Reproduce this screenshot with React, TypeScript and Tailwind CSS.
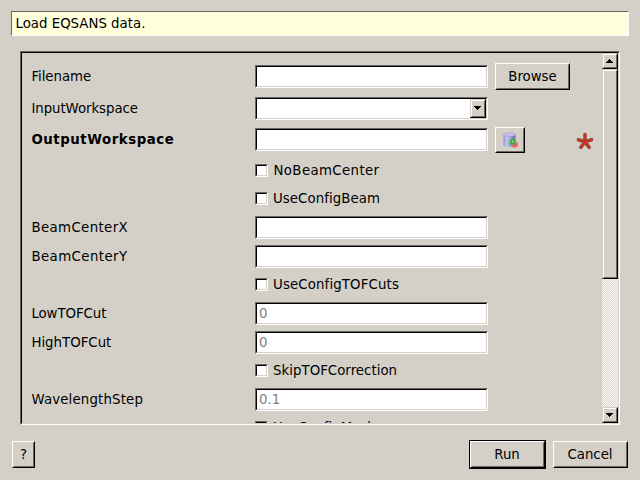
import React from "react";

const SUNKEN =
  "bg-white border border-t-[#6a6862] border-l-[#6a6862] border-b-white border-r-white";
const SUNKEN_INNER =
  "h-full w-full border border-t-black border-l-black border-b-[#d4d0c8] border-r-[#d4d0c8]";

function Arrow({ up = false, className = "" }: { up?: boolean; className?: string }) {
  return (
    <svg
      width="7"
      height="4"
      viewBox="0 0 7 4"
      shapeRendering="crispEdges"
      className={`mr-px block shrink-0 ${className}`}
    >
      {up ? (
        <path d="M3 0h1v1h1v1h1v1h1v1H0V3h1V2h1V1h1z" />
      ) : (
        <path d="M0 0h7v1H6v1H5v1H4v1H3V3H2V2H1V1H0z" />
      )}
    </svg>
  );
}

function Raised({ className = "", children }: { className?: string; children?: React.ReactNode }) {
  return (
    <div
      className={`shrink-0 border border-t-[#d4d0c8] border-l-[#d4d0c8] border-b-black border-r-black bg-[#d4d0c8] ${className}`}
    >
      <div className="flex h-full w-full items-center justify-center border border-t-white border-l-white border-b-[#6a6862] border-r-[#6a6862]">
        {children}
      </div>
    </div>
  );
}

function Button({ className = "", children }: { className?: string; children: React.ReactNode }) {
  return (
    <button
      className={`block shrink-0 border border-t-white border-l-white border-b-black border-r-black bg-[#d4d0c8] ${className}`}
    >
      <span className="flex h-full w-full items-center justify-center border border-t-[#d4d0c8] border-l-[#d4d0c8] border-b-[#6a6862] border-r-[#6a6862]">
        {children}
      </span>
    </button>
  );
}

function Field({ value = "", combo = false }: { value?: string; combo?: boolean }) {
  return (
    <div className={`h-[23px] w-[233px] shrink-0 ${SUNKEN}`}>
      <div className={`flex items-center justify-between ${SUNKEN_INNER}`}>
        <span className="pl-[2px] leading-[19px] text-[#808080]">{value}</span>
        {combo && (
          <Raised className="h-[19px] w-4">
            <Arrow className="mb-px" />
          </Raised>
        )}
      </div>
    </div>
  );
}

function Row({
  label,
  className = "",
  labelClass = "",
  children,
}: {
  label: string;
  className?: string;
  labelClass?: string;
  children: React.ReactNode;
}) {
  return (
    <div className={`flex items-center ${className}`}>
      <span className={`w-[224px] shrink-0 pl-[0.4px] leading-[18px] ${labelClass}`}>{label}</span>
      {children}
    </div>
  );
}

function Check({
  label,
  className = "",
  labelClass = "",
}: {
  label: string;
  className?: string;
  labelClass?: string;
}) {
  return (
    <div className={`ml-[224px] flex h-[13px] items-center ${className}`}>
      <div className={`size-[13px] shrink-0 ${SUNKEN}`}>
        <div className={SUNKEN_INNER} />
      </div>
      <span className={`ml-[5px] leading-[18px] ${labelClass}`}>{label}</span>
    </div>
  );
}

function DatabaseIcon() {
  return (
    <svg width="16" height="16" viewBox="0 0 16 16" className="block shrink-0">
      <defs>
        <linearGradient id="cylinder" x1="0" x2="1" y1="0" y2="0">
          <stop offset="0" stopColor="#9090cc" />
          <stop offset="0.25" stopColor="#c4c4ee" />
          <stop offset="0.6" stopColor="#9c9cd6" />
          <stop offset="1" stopColor="#6464a6" />
        </linearGradient>
      </defs>
      <path d="M1.500 2.500v10.500c0 1.200 2.500 2 6.250 2s5.750-1 5.750-2V2.500z" fill="url(#cylinder)" />
      <ellipse cx="7.500" cy="2.600" rx="6" ry="1.700" fill="#c3c3ec" stroke="#9494c8" strokeWidth="0.500" />
      <path d="M7.800 12.500V9.500q0-2.500 2.500-2.500h2l1.200 1.500v2.700H11l-1.500 1.300z" fill="#3fae38" />
      <path d="M9.800 9.500h1.800" stroke="#b5ecb0" strokeWidth="1.200" />
      <path d="M15.800 10v3q0 2.600-3 2.600H11L9.800 14l1.400-1.200h2l.8-2.300z" fill="#f2693f" />
    </svg>
  );
}

function RequiredMark() {
  const arms = "M8 8.800V1.600M8 8.800L1.400 6.700M8 8.800l6.600-2.100M8 8.800l-4.200 5.600M8 8.800l4.200 5.600";
  return (
    <svg width="16" height="16" viewBox="0 0 16 16" className="block shrink-0 overflow-visible">
      <path d={arms} fill="none" stroke="#85604f" strokeWidth="3.600" strokeLinecap="round" />
      <path d={arms} fill="none" stroke="#c13526" strokeWidth="2.500" strokeLinecap="round" />
    </svg>
  );
}

export default function App() {
  return (
    <div className="flex h-[480px] w-[640px] flex-col overflow-hidden bg-[#d4d0c8] px-[11px] pt-[11px] font-['DejaVu_Sans',sans-serif] text-[13.333px] text-black">
      <div className="h-[25px] w-[618px] shrink-0 border border-t-[#6a6862] border-l-[#6a6862] border-b-white border-r-white bg-[#ffffdc] pl-[3.500px] leading-[23px]">
        Load EQSANS data.
      </div>

      <div className="mt-[15px] ml-[9px] h-[374px] w-[600px] shrink-0 border border-t-[#6a6862] border-l-[#6a6862] border-b-white border-r-white">
        <div className="flex h-full w-full border border-t-black border-l-black border-b-[#d4d0c8] border-r-[#d4d0c8]">
          <div className="h-[370px] w-[580px] shrink-0 overflow-hidden pt-[10px] pl-[9px]">
            <Row label="Filename" className="h-[27px]" labelClass="tracking-[-0.04px]">
              <Field />
              <Button className="ml-[7px] h-[27px] w-[75px]">Browse</Button>
            </Row>
            <Row label="InputWorkspace" className="mt-[7px]" labelClass="tracking-[-0.06px]">
              <Field combo />
            </Row>
            <Row
              label="OutputWorkspace"
              className="mt-[7px] h-[26px]"
              labelClass="font-bold tracking-[0.54px]"
            >
              <div className="self-start pt-px">
                <Field />
              </div>
              <Button className="ml-[7px] h-[26px] w-[30px]">
                <DatabaseIcon />
              </Button>
              <div className="ml-[52px] pt-[2px]">
                <RequiredMark />
              </div>
            </Row>
            <Check label="NoBeamCenter" className="mt-[11px]" labelClass="pl-[0.5px] tracking-[0.37px]" />
            <Check label="UseConfigBeam" className="mt-[15px]" labelClass="tracking-[0.06px]" />
            <Row label="BeamCenterX" className="mt-[11px]" labelClass="tracking-[0.38px]">
              <Field />
            </Row>
            <Row label="BeamCenterY" className="mt-[6px]" labelClass="tracking-[0.42px]">
              <Field />
            </Row>
            <Check label="UseConfigTOFCuts" className="mt-[10px]" labelClass="tracking-[0.13px]" />
            <Row label="LowTOFCut" className="mt-[11px]" labelClass="tracking-[-0.06px]">
              <Field value="0" />
            </Row>
            <Row label="HighTOFCut" className="mt-[6px]">
              <Field value="0" />
            </Row>
            <Check label="SkipTOFCorrection" className="mt-[10px]" labelClass="tracking-[0.03px]" />
            <Row label="WavelengthStep" className="mt-[11px]" labelClass="tracking-[0.16px]">
              <Field value="0.1" />
            </Row>
            <Check label="UseConfigMask" className="mt-[10px]" />
          </div>

          <div className="flex h-[370px] w-4 shrink-0 flex-col bg-[conic-gradient(#fff_25%,#d4d0c8_0_50%,#fff_0_75%,#d4d0c8_0)] bg-[length:2px_2px]">
            <Raised className="size-4">
              <Arrow up />
            </Raised>
            <Raised className="h-[210px] w-4" />
            <Raised className="mt-auto size-4">
              <Arrow />
            </Raised>
          </div>
        </div>
      </div>

      <div className="mt-[15px] flex items-center pl-px">
        <Button className="h-[27px] w-[23px]">?</Button>
        <div className="ml-[434px] border border-black">
          <Button className="h-[27px] w-[75px]">
            <span className="pr-px">Run</span>
          </Button>
        </div>
        <Button className="ml-[7px] h-[27px] w-[75px]">
          <span className="pr-px">Cancel</span>
        </Button>
      </div>
    </div>
  );
}
